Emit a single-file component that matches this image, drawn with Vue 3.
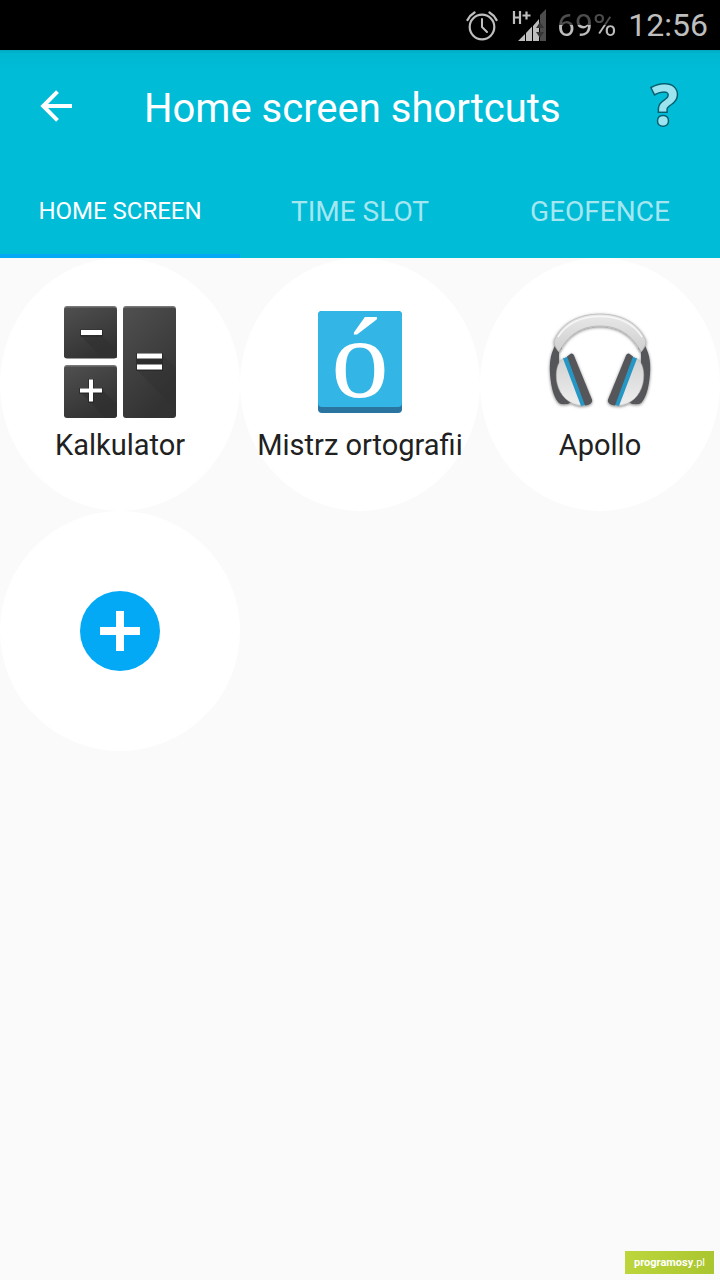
<script setup>
import { ref } from 'vue'

const tabs = ['HOME SCREEN', 'TIME SLOT', 'GEOFENCE']
const active = ref(0)
</script>

<template>
  <div class="screen">
    <div class="status">
      <svg class="alarm" viewBox="0 0 32 32" width="32" height="32" fill="none" stroke="#bebebe" stroke-linecap="round">
        <circle cx="16" cy="18" r="12.3" stroke-width="2.2" />
        <path d="M16 10v8l5 5" stroke-width="2" stroke-linejoin="round" />
        <path d="M1.500 11A18 18 0 0 1 8.500 3.500M30.500 11A18 18 0 0 0 23.500 3.500" stroke-width="2.400" />
      </svg>
      <svg class="signal" viewBox="0 0 34 32" width="34" height="32">
        <path d="M2 2v13M8 2v13M2 8.500h6M10.500 6.500h8M14.500 2.500v8" stroke="#bebebe" stroke-width="2.200" fill="none" />
        <path d="M34 0v32h-6V6z" fill="#4d4d4d" />
        <path d="M6 32l7-7v7zM14 24l6-6.500V32h-6zM21 17l6-7v22h-6z" fill="#bebebe" />
        <path d="M24 19l4-6 4 6zM24 23l4 6 4-6z" fill="#353535" />
      </svg>
      <span class="battery">69%</span>
      <span class="clock">12:56</span>
    </div>

    <header class="bar">
      <div class="toolbar">
        <button class="icon-btn" aria-label="Back">
          <svg viewBox="0 0 32 32" width="32" height="32" fill="none" stroke="#fff" stroke-width="4">
            <path d="M32 16H3M17.500 1.700L3.200 16l14.300 14.300" />
          </svg>
        </button>
        <h1>Home screen shortcuts</h1>
        <button class="help">?</button>
      </div>
      <nav class="tabs" role="tablist">
        <button
          v-for="(t, i) in tabs"
          :key="t"
          role="tab"
          :aria-selected="active === i"
          :class="['tab', { active: active === i }]"
          @click="active = i"
        >{{ t }}</button>
      </nav>
    </header>

    <main class="grid">
      <button class="cell">
        <svg viewBox="0 0 112 112" width="112" height="112">
          <defs>
            <linearGradient id="key" x1="0" y1="0" x2="0.5" y2="1">
              <stop offset="0" stop-color="#505050" />
              <stop offset="1" stop-color="#323232" />
            </linearGradient>
          </defs>
          <rect width="53" height="52" rx="3" fill="#777" />
          <rect y="1.500" width="53" height="51" rx="3" fill="url(#key)" />
          <rect y="59" width="53" height="52" rx="3" fill="#777" />
          <rect y="60.500" width="53" height="51.500" rx="3" fill="url(#key)" />
          <rect x="59" width="53" height="52" rx="3" fill="#777" />
          <rect x="59" y="1.500" width="53" height="110.500" rx="3" fill="url(#key)" />
          <path d="M17 30h21l15 14v8H38z" fill="#303030" opacity=".6" />
          <path d="M17 87l8 8 16 17h10l2-2V98L38 84z" fill="#2e2e2e" opacity=".6" />
          <path d="M73 64h25V48l14 14v42z" fill="#303030" opacity=".4" />
          <path d="M16 23.500h23v7H16zM15 82h9v-9h6v9h9v6h-9v9h-6v-9h-9zM72 47h27v18H72z" fill="#222" opacity=".6" />
          <path d="M17 24h21v5H17zM16 82.500h9v-9h4v9h9v4h-9v9h-4v-9h-9zM73 47.500h25v5H73zM73 58.500h25v5H73z" fill="#fff" />
        </svg>
        <span class="label">Kalkulator</span>
      </button>

      <button class="cell">
        <svg viewBox="0 0 112 112" width="112" height="112">
          <rect x="14" y="5" width="84" height="102" rx="4" fill="#2a74a0" />
          <path d="M14 9a4 4 0 0 1 4-4h76a4 4 0 0 1 4 4v88a4 4 0 0 1-4 4H18a4 4 0 0 1-4-4z" fill="#33b5e5" />
          <text class="letter" x="56" y="91" text-anchor="middle">ó</text>
        </svg>
        <span class="label">Mistrz ortografii</span>
      </button>

      <button class="cell">
        <svg viewBox="0 0 112 112" width="112" height="112">
          <defs>
            <linearGradient id="band" x1="0" y1="0" x2="0" y2="1">
              <stop offset="0" stop-color="#e8e8e8" />
              <stop offset="1" stop-color="#cfcfcf" />
            </linearGradient>
            <linearGradient id="cup" x1="0" y1="0" x2="0" y2="1">
              <stop offset="0" stop-color="#d2d2d2" />
              <stop offset="1" stop-color="#eeeeee" />
            </linearGradient>
            <filter id="shade" x="-10%" y="-10%" width="120%" height="125%">
              <feDropShadow dx="0" dy="1" stdDeviation="1.500" flood-color="#000" flood-opacity=".5" />
            </filter>
            <g id="side">
              <path d="M12 38C7 46 5 56 6 68C7 82 10 91 14 96C16 99 20 98 24 98L30 94L15 70V46L18 42z" fill="#55565a" />
              <path d="M20 52C13 56 11 66 13 77C16 90 25 99 38 99.500L23 55z" fill="url(#cup)" stroke="#aaa" stroke-width=".5" />
              <path d="M19 52.500l5-2 19 48-6 1.500z" fill="#2797c4" />
              <path d="M23 50.500l4-3c1 0 2 0 3 2l18 44c1 3-2 5.500-7 6z" fill="#55565a" />
            </g>
          </defs>
          <g filter="url(#shade)">
            <use href="#side" />
            <use href="#side" transform="matrix(-1 0 0 1 112 0)" />
            <path d="M10 35C17 17 35 8 56 8S95 17 102 35c0 4-2 8-5 11C88 29 75 20 56 20S24 29 15 46c-3-3-5-7-5-11z" fill="url(#band)" stroke="#b0b0b0" stroke-width=".7" />
            <path d="M14 31C23 17 38 10.500 56 10.500S89 17 98 31" fill="none" stroke="#f7f7f7" stroke-width="1.500" />
          </g>
        </svg>
        <span class="label">Apollo</span>
      </button>

      <button class="cell add" aria-label="Add shortcut">
        <svg viewBox="0 0 80 80" width="80" height="80">
          <circle cx="40" cy="40" r="40" fill="#03a9f4" />
          <path d="M20 40h40M40 20v40" stroke="#fff" stroke-width="8" />
        </svg>
      </button>
    </main>

    <footer class="foot">
      <a class="mark" href="#"><b>programosy</b>.pl</a>
    </footer>
  </div>
</template>

<style>
body {
  background: #fafafa;
}
</style>

<style scoped>
.screen {
  min-height: 100vh;
  display: flex;
  flex-direction: column;
  background: #fafafa;
  font-family: Roboto, "Noto Sans", sans-serif;
}
button {
  border: 0;
  padding: 0;
  margin: 0;
  background: none;
  font: inherit;
  color: inherit;
  cursor: pointer;
}
svg {
  display: block;
  overflow: visible;
}
.status {
  height: 50px;
  background: #000;
  color: #bebebe;
  display: flex;
  align-items: center;
  justify-content: flex-end;
  padding-right: 12px;
  font-size: 32px;
  line-height: 52px;
}
.alarm {
  margin-right: 14px;
}
.signal {
  margin-right: 11px;
}
.battery {
  margin-right: 12px;
  background: linear-gradient(#4d4d4d 50%, #bebebe 50%);
  background-clip: text;
  -webkit-background-clip: text;
  color: transparent;
}
.bar {
  background: linear-gradient(#00a9c0, #00b7d1 4px, #00bcd7 20px);
  color: #fff;
}
.toolbar {
  height: 112px;
  display: flex;
  align-items: center;
  padding: 0 42px 0 40px;
}
h1 {
  flex: 1;
  margin: 0;
  padding: 6px 0 0 72px;
  font-size: 40px;
  line-height: 48px;
  font-weight: 400;
  white-space: nowrap;
}
.help {
  padding-bottom: 4px;
  font: 700 55px/64px "Open Sans", sans-serif;
  color: #9be4f0;
  -webkit-text-stroke: 3px #04606f;
  paint-order: stroke fill;
}
.tabs {
  display: grid;
  grid-template-columns: repeat(3, 1fr);
}
.tab {
  height: 96px;
  padding-top: 6px;
  border-bottom: 4px solid transparent;
  font-size: 28px;
  color: #a5e7f1;
}
.tab.active {
  font-size: 24px;
  color: #fff;
  border-color: #03a9f4;
}
.grid {
  flex: 1;
  display: grid;
  grid-template-columns: repeat(3, 1fr);
  align-content: start;
}
.cell {
  display: flex;
  flex-direction: column;
  align-items: center;
  padding: 48px 0 46px;
  background: #fff;
  border-radius: 50%;
}
.add {
  padding: 80px 0;
}
.label {
  margin-top: 7px;
  font-size: 29px;
  line-height: 40px;
  color: #212121;
  white-space: nowrap;
}
.letter {
  font-family: "Liberation Serif", serif;
  font-size: 115px;
  fill: #fff;
}
.foot {
  display: flex;
  justify-content: flex-end;
  padding: 6px;
}
.mark {
  padding: 0 9px;
  background: linear-gradient(100deg, #bdd63c, #a9c52f);
  font: 11px/23px Roboto, sans-serif;
  color: #fff;
  text-decoration: none;
}
</style>
